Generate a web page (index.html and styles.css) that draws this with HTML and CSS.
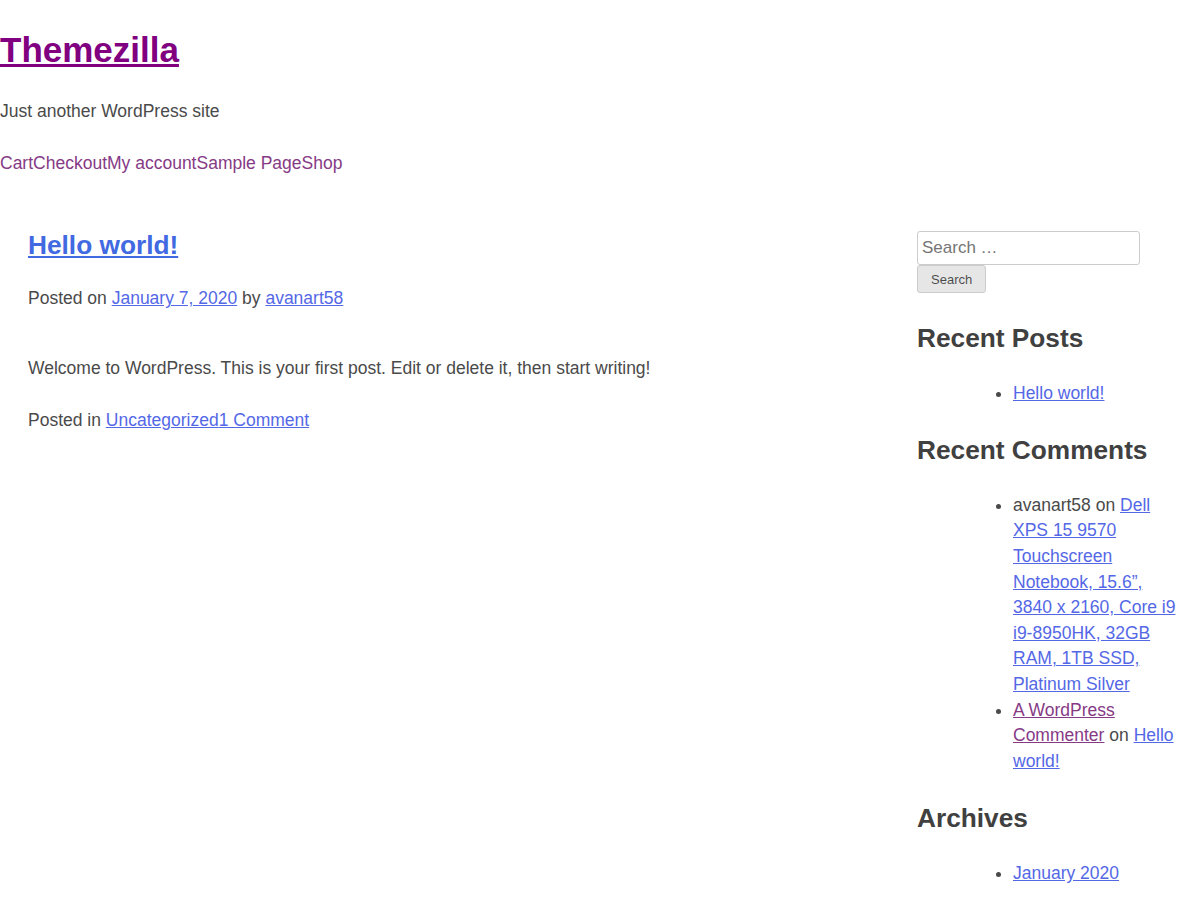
FILE: index.html
```html
<!DOCTYPE html>
<html lang="en">
<head>
<meta charset="utf-8">
<title>Themezilla – Just another WordPress site</title>
<link rel="stylesheet" href="styles.css">
</head>
<body>
<header class="site-header">
  <h1 class="site-title"><a href="#" class="visited">Themezilla</a></h1>
  <p class="site-description">Just another WordPress site</p>
  <nav class="main-navigation">
    <ul class="menu">
      <li><a href="#">Cart</a></li>
      <li><a href="#">Checkout</a></li>
      <li><a href="#">My account</a></li>
      <li><a href="#">Sample Page</a></li>
      <li><a href="#">Shop</a></li>
    </ul>
  </nav>
</header>
<div class="site-content">
  <main class="site-main">
    <article class="post">
      <h2 class="entry-title"><a href="#">Hello world!</a></h2>
      <div class="entry-meta">Posted on <a href="#">January 7, 2020</a> by <a href="#">avanart58</a></div>
      <div class="entry-content"><p>Welcome to WordPress. This is your first post. Edit or delete it, then start writing!</p></div>
      <footer class="entry-footer">Posted in <a href="#">Uncategorized</a><a href="#">1 Comment</a></footer>
    </article>
  </main>
  <aside class="widget-area">
    <form class="search-form">
      <input type="search" class="search-field" placeholder="Search …">
      <button type="button" class="search-submit">Search</button>
    </form>
    <section class="widget">
      <h2 class="widget-title">Recent Posts</h2>
      <ul class="widget-list">
        <li><a href="#">Hello world!</a></li>
      </ul>
    </section>
    <section class="widget widget-comments">
      <h2 class="widget-title">Recent Comments</h2>
      <ul class="widget-list">
        <li>avanart58 on <a href="#">Dell XPS 15 9570 Touchscreen Notebook, 15.6”, 3840 x 2160, Core i9 i9&#8209;8950HK, 32GB RAM, 1TB SSD, Platinum Silver</a></li>
        <li><a href="#" class="visited">A WordPress Commenter</a> on <a href="#">Hello world!</a></li>
      </ul>
    </section>
    <section class="widget">
      <h2 class="widget-title">Archives</h2>
      <ul class="widget-list">
        <li><a href="#">January 2020</a></li>
      </ul>
    </section>
  </aside>
</div>
</body>
</html>
```

FILE: styles.css
```css
html, body {
  margin: 0;
  padding: 0;
}
body {
  font-family: "Liberation Sans", Arial, sans-serif;
  font-size: 17.5px;
  line-height: 25.6px;
  color: #4a4a4a;
  background: #fff;
}
a {
  color: #5468e6;
}
a.visited {
  color: #863a86;
}
.site-header {
  padding-top: 29px;
}
.site-title {
  margin: 0;
  font-size: 35px;
  line-height: 42px;
  font-weight: bold;
}
.site-title a.visited {
  color: #800080;
}
.site-description {
  margin: 28px 0 0;
}
.main-navigation {
  margin-top: 26px;
}
.menu {
  display: flex;
  list-style: none;
  margin: 0;
  padding: 0;
}
.menu a {
  color: #863a86;
  text-decoration: none;
  display: block;
}
.site-content {
  display: flex;
  margin-top: 54px;
}
.site-main {
  flex: 1;
  padding-left: 28px;
}
.entry-title {
  margin: 0;
  font-size: 26.25px;
  line-height: 31px;
}
.entry-title a {
  color: #4169e1;
}
.entry-meta {
  margin-top: 25px;
}
.entry-content p {
  margin: 44px 0 0;
}
.entry-footer {
  margin-top: 27px;
}
.widget-area {
  width: 263px;
  margin-right: 20px;
  padding-top: 1px;
}
.search-form {
  display: flex;
  flex-direction: column;
  align-items: flex-start;
  margin-bottom: 30px;
}
.search-field {
  box-sizing: border-box;
  width: 223px;
  height: 34px;
  border: 1px solid #ccc;
  border-radius: 3px;
  padding: 3px 4px;
  font-family: "Liberation Sans", Arial, sans-serif;
  font-size: 17px;
  color: #666;
  margin: 0;
}
.search-field::placeholder {
  color: #757575;
}
.search-submit {
  box-sizing: border-box;
  height: 28px;
  padding: 0 13px;
  border: 1px solid #ccc;
  border-radius: 3px;
  background: #e6e6e6;
  color: rgba(0,0,0,0.7);
  font-family: "Liberation Sans", Arial, sans-serif;
  font-size: 13px;
  margin: 0;
}
.widget-title {
  margin: 0 0 27px;
  font-size: 26.25px;
  line-height: 31px;
  color: #404040;
}
.widget-list {
  margin: 0 0 28px;
  padding: 0 0 0 96px;
}
.widget-comments .widget-list {
  margin-bottom: 29px;
}
```
